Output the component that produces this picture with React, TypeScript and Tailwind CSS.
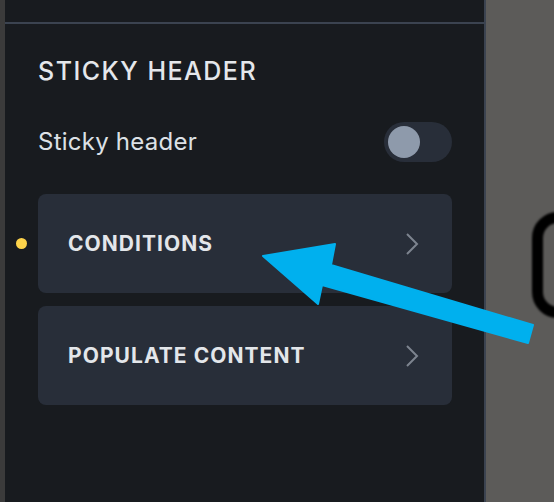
function Toggle() {
  return (
    <div className="flex h-[40px] w-[68px] items-center rounded-full bg-[#282e39] px-[4px]">
      <div className="h-[32px] w-[32px] rounded-full bg-[#8e9aab]" />
    </div>
  );
}

function Chevron() {
  return (
    <svg width="14" height="22" viewBox="0 0 14 22" fill="none" className="text-[#7d848f]">
      <polyline points="2,1 12,11 2,21" stroke="currentColor" strokeWidth="2" strokeLinejoin="miter" />
    </svg>
  );
}

function NavCard({ label, dot }: { label: string; dot?: boolean }) {
  return (
    <div className="relative flex h-[99px] items-center justify-between rounded-[8px] bg-[#282e39] pl-[30px] pr-[33px]">
      {dot ? <span className="absolute left-[-22px] top-[44px] h-[11px] w-[11px] rounded-full bg-[#fdd34b]" /> : null}
      <span className="text-[21px] font-bold tracking-[0.05em] text-[#e3e6ea]">{label}</span>
      <Chevron />
    </div>
  );
}

export default function App() {
  return (
    <div
      className="relative flex h-[502px] w-[554px] overflow-hidden bg-[#5c5b59]"
      style={{ fontFamily: "Inter, 'Noto Sans', sans-serif" }}
    >
      <div className="w-[5px] shrink-0 bg-[#3b3b3b]" />
      <aside className="flex w-[481px] shrink-0 flex-col border-r-2 border-[#3b4350] bg-[#181b1f]">
        <div className="h-[24px] border-b-2 border-[#3b4350]" />
        <div className="flex flex-col px-[33px] pr-[32px]">
          <h2 className="mt-[32px] text-[25px] font-medium leading-[30px] tracking-[0.06em] text-[#e4e7eb]">
            STICKY HEADER
          </h2>
          <div className="mt-[36px] flex items-center justify-between">
            <span className="text-[24px] leading-[30px] tracking-[0.01em] text-[#dde1e6]">Sticky header</span>
            <Toggle />
          </div>
          <div className="mt-[32px] flex flex-col gap-[13px]">
            <NavCard label="CONDITIONS" dot />
            <NavCard label="POPULATE CONTENT" />
          </div>
        </div>
      </aside>

      {/* blurred outline on the canvas */}
      <div className="absolute left-[532px] top-[212px] h-[106px] w-[90px] rounded-[26px] border-[11px] border-black blur-[1px]" />

      {/* annotation arrow */}
      <svg className="pointer-events-none absolute left-0 top-0" width="554" height="502" viewBox="0 0 554 502">
        <polygon
          points="263,256 335,244 331,265 533,325 528,343 322,285 318,304"
          fill="#00b0ee"
          stroke="#00b0ee"
          strokeWidth="2"
          strokeLinejoin="round"
        />
      </svg>
    </div>
  );
}
